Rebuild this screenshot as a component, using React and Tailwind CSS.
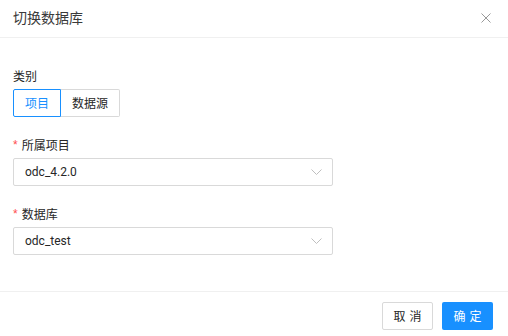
import React from 'react';

const Chevron = () => (
    <svg width="11" height="6" viewBox="0 0 11 6" fill="none" className="shrink-0">
        <path d="M0.5 0.5 L5.5 5.5 L10.5 0.5" stroke="#bfbfbf" strokeWidth="1" />
    </svg>
);

const Select = ({ value }) => (
    <div className="w-[320px] h-[28px] border border-[#d9d9d9] rounded-[2px] bg-white flex items-center justify-between pl-[11px] pr-[10px]">
        <span className="text-[12px] text-[#262626] font-['Roboto','Noto_Sans_CJK_SC',sans-serif]">{value}</span>
        <Chevron />
    </div>
);

const Label = ({ required, children }) => (
    <div className="h-[20px] flex items-center text-[12px] text-[#262626] mb-[3px]">
        {required && <span className="text-[#ff4d4f] mr-[4px] text-[12px] font-['Liberation_Sans']">*</span>}
        {children}
    </div>
);

export default function App() {
    return (
        <div className="w-[508px] h-[336px] bg-white flex flex-col overflow-hidden font-['Noto_Sans_CJK_SC',sans-serif]">
            {/* Header */}
            <div className="h-[38px] shrink-0 border-b border-[#f0f0f0] flex items-center justify-between pl-[13px] pr-[17px] pb-[2px]">
                <span className="text-[14px] text-[#3a3a3a]">切换数据库</span>
                <svg width="10" height="10" viewBox="0 0 10 10" className="text-[#999999]">
                    <path d="M0.5 0.5 L9.5 9.5 M9.5 0.5 L0.5 9.5" stroke="currentColor" strokeWidth="1" />
                </svg>
            </div>

            {/* Body */}
            <div className="flex-1 pl-[13px] pt-[28px] flex flex-col gap-[18px]">
                <div>
                    <Label>类别</Label>
                    <div className="flex h-[28px] text-[12px]">
                        <div className="px-[11px] flex items-center border border-[#1890ff] text-[#1890ff] rounded-l-[2px] bg-white">项目</div>
                        <div className="px-[11px] flex items-center border border-l-0 border-[#d9d9d9] text-[#262626] rounded-r-[2px] bg-white">数据源</div>
                    </div>
                </div>
                <div>
                    <Label required>所属项目</Label>
                    <Select value="odc_4.2.0" />
                </div>
                <div>
                    <Label required>数据库</Label>
                    <Select value="odc_test" />
                </div>
            </div>

            {/* Footer */}
            <div className="h-[45px] shrink-0 border-t border-[#f0f0f0] flex items-start justify-end gap-[9px] pt-[10px] pr-[15px]">
                <button className="w-[51px] h-[28px] border border-[#d9d9d9] rounded-[2px] bg-white text-[12px] text-[#262626] tracking-[4px] pl-[4px]">取消</button>
                <button className="w-[51px] h-[28px] rounded-[2px] bg-[#1890ff] text-[12px] text-white tracking-[4px] pl-[4px]">确定</button>
            </div>
        </div>
    );
}
